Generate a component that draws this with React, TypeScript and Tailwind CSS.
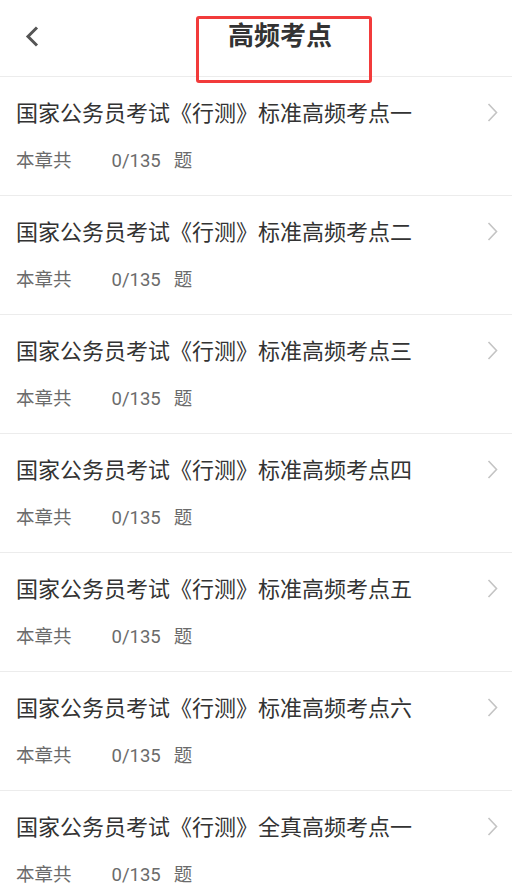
const chapters = [
  "国家公务员考试《行测》标准高频考点一",
  "国家公务员考试《行测》标准高频考点二",
  "国家公务员考试《行测》标准高频考点三",
  "国家公务员考试《行测》标准高频考点四",
  "国家公务员考试《行测》标准高频考点五",
  "国家公务员考试《行测》标准高频考点六",
  "国家公务员考试《行测》全真高频考点一",
];

function ChapterRow({ title }: { title: string }) {
  return (
    <div className="border-b border-[#ececec] pl-[16px] pr-[14px] pt-[22px] pb-[22px]">
      <div className="flex items-center justify-between h-[30px]">
        <span className="text-[22px] leading-[30px] text-[#333333] whitespace-nowrap">{title}</span>
        <svg width="11" height="19" viewBox="0 0 11 19" className="shrink-0 -mt-[4px]">
          <polyline points="1.5,1 9.5,9.5 1.5,18" fill="none" stroke="#c4c4c4" strokeWidth="1.6" />
        </svg>
      </div>
      <div className="mt-[20px] flex items-center h-[24px] text-[18.5px] leading-[24px] text-[#6b6b6b]">
        <span>本章共</span>
        <span className="ml-[40px]">0/135</span>
        <span className="ml-[13px]">题</span>
      </div>
    </div>
  );
}

export default function App() {
  return (
    <div
      className="min-h-screen bg-white"
      style={{ fontFamily: 'Roboto, "Noto Sans CJK SC", sans-serif' }}
    >
      {/* Header */}
      <div className="relative flex items-center h-[77px] border-b border-[#ececec]">
        <div className="w-[64px] h-full flex items-center pl-[25px] -mt-[4px]">
          <svg width="14" height="21" viewBox="0 0 14 21">
            <polyline points="12,1.5 3,10.5 12,19.5" fill="none" stroke="#555555" strokeWidth="3" />
          </svg>
        </div>
        <div className="flex-1 pr-[16px] text-center -mt-[4px]">
          <h1 className="text-[26px] leading-[34px] font-bold text-[#333333]">高频考点</h1>
        </div>
        {/* highlight box */}
        <div className="absolute left-[196px] top-[16px] w-[176px] h-[67px] border-[3px] border-[#f23b3b] rounded-[3px] pointer-events-none" />
      </div>

      {chapters.map((c) => (
        <ChapterRow key={c} title={c} />
      ))}
    </div>
  );
}
